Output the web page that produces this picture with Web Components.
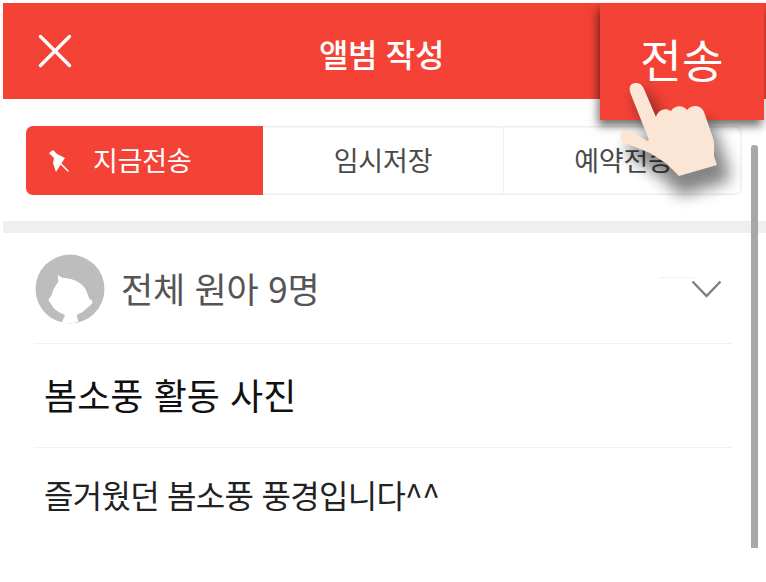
<!DOCTYPE html>
<html lang="ko"><head><meta charset="utf-8">
<style>
html,body{margin:0;padding:0;background:#fff;width:766px;height:582px;overflow:hidden}
body{font-family:"Noto Sans CJK KR","Noto Sans",sans-serif}
</style></head><body>
<album-screen></album-screen>
<script>
const KR='"Noto Sans CJK KR","Noto Sans",sans-serif';
function def(name,css,html){
  customElements.define(name,class extends HTMLElement{
    constructor(){super();const r=this.attachShadow({mode:'open'});r.innerHTML=`<style>${css}</style>${html}`;}
  });
}
def('app-header',`
:host{display:flex;align-items:center;height:96px;background:#f44336;color:#fff;padding-left:35px;position:relative;box-sizing:border-box}
svg{display:block;flex:none}
.t{position:absolute;left:0;right:0;text-align:center;font:500 32px/1 ${KR};padding-right:6px;top:34px;letter-spacing:-.3px}
`,`<svg width="34" height="34" viewBox="0 0 34 34"><path d="M2.500 2.500 31.500 31.500M31.500 2.500 2.500 31.500" stroke="#fff" stroke-width="3.400" fill="none" stroke-linecap="round"/></svg><div class="t">앨범 작성</div>`);
def('seg-tabs',`
:host{display:flex;height:69px;border-radius:7px;box-sizing:border-box;overflow:hidden;box-shadow:inset 0 0 0 1.500px #eeeeee;font:400 27px/1 ${KR};color:#4a4a4a;letter-spacing:-.2px}
.a{width:237px;flex:none;background:#f44336;color:#fff;display:flex;align-items:center;gap:20px;padding-left:21px;box-sizing:border-box}
.a span{position:relative;top:-1px}
.b{width:241px;flex:none;display:flex;align-items:center;justify-content:center;border-right:1.500px solid #eeeeee;box-sizing:border-box;padding-bottom:2px}
.c{flex:1;display:flex;align-items:center;justify-content:center;padding-left:1px;padding-bottom:2px}
svg{display:block;flex:none}
`,`<div class="a"><svg width="26" height="26" viewBox="0 0 26 26"><path d="M2 5 6 2 10 6 18 10 14 16 9 24 6 15 7 10Z" fill="#fff"/><path d="M14 16 21 23" stroke="#fff" stroke-width="1.500" stroke-linecap="round"/></svg><span>지금전송</span></div><div class="b">임시저장</div><div class="c">예약전송</div>`);
def('recipient-row',`
:host{display:flex;align-items:center;height:110px;box-sizing:border-box;border-bottom:1.500px solid #f1f1f1;margin:0 34px 0 31px;position:relative;color:#555;font:400 35px/1 ${KR}}
svg{display:block;flex:none}
.av{margin:0 16px 0 1px;border-radius:50%}
span{flex:1;letter-spacing:-.2px;position:relative;top:-1px}
.ch{margin-right:10px;position:relative;top:0}
.line{position:absolute;left:625px;width:36px;top:43px;height:1px;background:#f2f2f2}
`,`<svg class="av" width="70" height="70" viewBox="0 0 70 70"><circle cx="35" cy="35" r="34.500" fill="#bdbdbd"/><path d="M22.700 21C25 23 28 24 31.700 24.300C37 25 41.500 26.500 45 29.300C48 31.500 50.500 34.500 51.700 37.700L54 44L57.700 47.700C57 50 55 52 53.300 52.700C51 55.500 48 58 45 59.300L41.700 61L43.300 67.700C38 69.500 32 69.500 26.700 68.700L30 61C27.500 60 25.500 59 23.300 57.700C20.500 56 18 54 16.700 51L13.300 46L16.700 41C17.500 38 18.500 35 20 32.700L23.300 27.700Z" fill="#fff"/></svg><span>전체 원아 9명</span><div class="line"></div><svg class="ch" width="31" height="18" viewBox="0 0 31 18"><path d="M1.500 1.500 15.500 16 29.500 1.500" stroke="#808080" stroke-width="2.400" fill="none"/></svg>`);
def('field-row',`
:host{display:flex;align-items:center;box-sizing:border-box;margin:0 34px 0 31px;padding-left:10px;color:var(--c,#111);font:400 var(--fs,36px)/1 ${KR};height:var(--h,103px);border-bottom:var(--bb,1.500px solid #f1f1f1);letter-spacing:var(--ls,0)}
span{position:relative;top:var(--dy,0px)}
`,`<span><slot></slot></span>`);
def('send-overlay',`
:host{display:flex;align-items:flex-start;justify-content:center;position:absolute;left:600px;top:3px;width:164px;height:117px;background:#f44336;box-shadow:-2px 6px 9px rgba(0,0,0,.55);color:#fff;font:400 45px/1 ${KR};padding-top:33px;box-sizing:border-box;letter-spacing:.3px}
`,`<slot></slot>`);
def('hand-pointer',`
:host{display:block;position:absolute;left:620px;top:76px;width:110px;height:110px}
svg{display:block;overflow:visible}
`,`<svg width="110" height="110" viewBox="0 0 110 110"><defs><filter id="s" x="-40%" y="-40%" width="180%" height="180%"><feGaussianBlur stdDeviation="8"/></filter></defs>
<path d="M12 12 Q20 2 28 14 L42 44 Q50 36 58 40 Q66 34 75 39 Q87 34 92 46 L105 82 L107 97 L58 112 L43 97 L4 69 Q2 56 16 57 L30 60Z" fill="#000" opacity=".48" filter="url(#s)" transform="translate(3 8)"/>
<path d="M10 16 C8.500 9 12 7 16 7 C20 7 22 9 24 13 L36 41 C38 34 45 31 51 35 C55 29 63 29 67 34 C72 28 81 29 84 36 L93 62 C95 68 94 75 94 80 L97 89 L59 100 L47 88 L30 77 L5 67 C1 65 -1 61 1 58 C3 54 9 54 13 56 L27 65 L29 64 Z" fill="#fbe6d6"/></svg>`);
def('album-screen',`
:host{display:block;position:relative;width:766px;height:582px;padding:3px 0 0 3px;box-sizing:border-box;overflow:hidden;background:#fff}
.tabs{padding:27px 24px 26px 23px}
.band{height:12px;background:#efefef}
.scroll{position:absolute;left:751px;top:145px;width:7px;height:403px;background:#a8a8a8;border-radius:3px 3px 0 0}
.body{padding-top:1px}
.m{--fs:36px;--h:104px;--c:#111;--dy:-2px;--ls:.05px}
.d{--fs:32px;--h:89px;--bb:none;--c:#222;--dy:1px;--ls:-.72px}
`,`<app-header></app-header>
<div class="tabs"><seg-tabs></seg-tabs></div>
<div class="band"></div>
<div class="body"><recipient-row></recipient-row>
<field-row class="m">봄소풍 활동 사진</field-row>
<field-row class="d">즐거웠던 봄소풍 풍경입니다^^</field-row></div>
<div class="scroll"></div>
<send-overlay>전송</send-overlay>
<hand-pointer></hand-pointer>`);
</script></body></html>
